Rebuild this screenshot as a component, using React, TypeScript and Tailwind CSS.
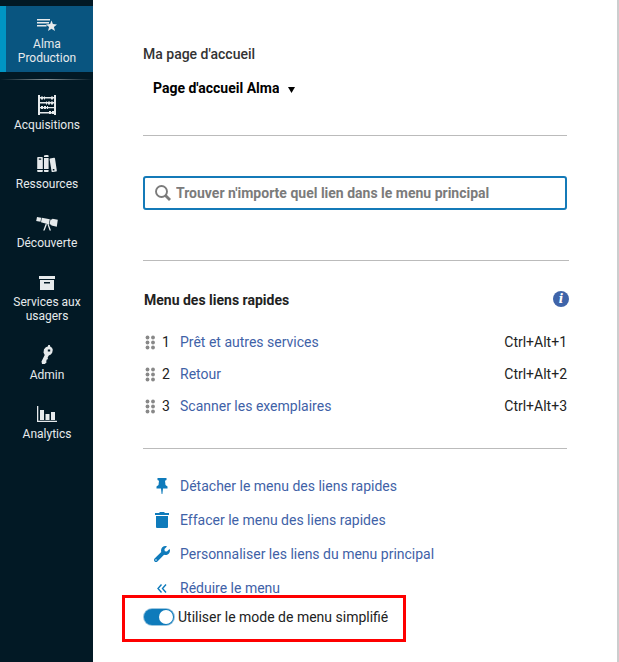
import { useState } from "react";
import type { ReactNode } from "react";
import { FaWrench } from "react-icons/fa";

const AlmaIcon = () => (
  <svg width="22" height="20" viewBox="0 0 22 20" fill="currentColor" aria-hidden="true">
    <path d="M1 4h13v1.400H1zM1 7h12v1.400H1zM1 10h9.500v1.400H1z" />
    <path d="M15.500 5.500l1.400 3.600 4.100.3-3.100 2.500 1.100 4-3.500-2.200-3.500 2.200 1.100-4-3.100-2.500 4.100-.3z" />
  </svg>
);

const AbacusIcon = () => (
  <svg width="20" height="20" viewBox="0 0 20 20" fill="currentColor" aria-hidden="true">
    <path d="M1 0h2v20H1zM17 0h2v20h-2zM3 2h14v1.500H3zM3 7h14v1.500H3zM3 12h14v1.300H3zM3 17h14v1.500H3z" />
    <path d="M4 1.500h2v3H4zM7 1.500h1v3H7zM14 1.500h2v3h-2zM9 6.500h1v3H9zM11 6.500h2v3h-2zM14 6.500h2v3h-2zM4 11h2v3H4zM7 11h2v3H7zM10 11h1v3h-1zM12 16h2v3h-2zM15 16h2v3h-2z" />
  </svg>
);

const BooksIcon = () => (
  <svg width="22" height="20" viewBox="0 0 22 20" fill="currentColor" aria-hidden="true">
    <path
      fillRule="evenodd"
      d="M2 3h4a.8.8 0 0 1 .8.8V15H1.200V3.800A.8.8 0 0 1 2 3zm.8 1.600v1.200h2.400V4.600zM1.200 16h5.600v1.200a.8.8 0 0 1-.8.8H2a.8.8 0 0 1-.8-.8z"
    />
    <path d="M8 1.600L10 1h1.400l1.200.6V3H8zM8 4h4.600v11H8zM8 16h4.600v1.400l-.6.6H8.600l-.6-.6z" />
    <path
      fillRule="evenodd"
      d="M14 4.600l4-.8a.8.8 0 0 1 1 .6l1.800 12a.8.8 0 0 1-.6 1l-3.600.6a.8.8 0 0 1-1-.6l-2-12a.8.8 0 0 1 .4-.8zm2.800 10.400v1.400h1.600V15z"
    />
  </svg>
);

const TelescopeIcon = () => (
  <svg width="22" height="20" viewBox="0 0 22 20" fill="currentColor" aria-hidden="true">
    <path d="M1 4l4.200.7-.7 4.100-4.300-.8zM5.800 4.800l8 1.400-.9 5.200-7.900-2.100zM14.500 6.400h1.300l.7-.6 5.300.9-1 7-5.300-1.100-.4-.9-1.600-.4z" />
    <path d="M9.600 11l1.400.3L8.600 17.500H7.200zM11.400 11.300l1.200-.2 2.400 6.400h-1.400z" />
  </svg>
);

const BoxIcon = () => (
  <svg width="20" height="20" viewBox="0 0 20 20" fill="currentColor" aria-hidden="true">
    <path fillRule="evenodd" d="M2 4h16v3H2zM3 8h14v10H3zm4 2v1.500h6V10z" />
  </svg>
);

const KeyIcon = () => (
  <svg width="20" height="20" viewBox="0 0 20 20" fill="currentColor" aria-hidden="true">
    <path
      fillRule="evenodd"
      d="M8.800 2.300l2-.8.500-1.500h1.500l.6 1.700 1.600 1.100.8 2-.6 3-1.400 1.800-2 .9-1.200 2.200.4 1.200-1.400.8-.3 1.700.2 1L7.800 19H5l-.5-2.500L7.700 10 6.500 7.500 7 4.300zM10.800 4.500v2h2.400v-2z"
    />
  </svg>
);

const ChartIcon = () => (
  <svg width="20" height="20" viewBox="0 0 20 20" fill="currentColor" aria-hidden="true">
    <path d="M0 2h1.300v14.800H20V18H0zM3 6h4v10H3zM8.500 10h4v6h-4zM14 8h4v8h-4z" />
  </svg>
);

const PinIcon = () => (
  <svg width="16" height="16" viewBox="0 0 16 16" fill="currentColor" aria-hidden="true">
    <path d="M3.500 0h9v2l-1.500.7.500 4.300 2 1.500V10.500H9L8.400 16h-.8L7 10.500H2.500V8.500l2-1.500.5-4.300L3.500 2z" />
  </svg>
);

const TrashIcon = () => (
  <svg width="16" height="16" viewBox="0 0 16 16" fill="currentColor" aria-hidden="true">
    <path d="M1 1h4.500V0h5v1H15v2H1zM2 4h12v11a1 1 0 0 1-1 1H3a1 1 0 0 1-1-1z" />
  </svg>
);

const CollapseIcon = () => (
  <svg width="16" height="16" viewBox="0 0 16 16" fill="none" stroke="currentColor" strokeWidth="1.400" aria-hidden="true">
    <path d="M7.500 4.500l-3.500 4 3.500 4M12 4.500l-3.500 4 3.500 4" />
  </svg>
);

const SearchIcon = () => (
  <svg width="16" height="16" viewBox="0 0 16 16" fill="none" stroke="currentColor" aria-hidden="true">
    <circle cx="6.500" cy="6.500" r="5.500" strokeWidth="1.900" />
    <path d="M10.500 10.500L15 15" strokeWidth="2.800" />
  </svg>
);

const DragIcon = () => (
  <svg width="10" height="16" viewBox="0 0 10 16" fill="currentColor" aria-hidden="true">
    {[3, 8, 13].map((y) => (
      <g key={y}>
        <circle cx="2.500" cy={y + 0.5} r="1.900" />
        <circle cx="8" cy={y + 0.5} r="1.900" />
      </g>
    ))}
  </svg>
);

const sections: { label: string; icon: ReactNode }[] = [
  { label: "Acquisitions", icon: <AbacusIcon /> },
  { label: "Ressources", icon: <BooksIcon /> },
  { label: "Découverte", icon: <TelescopeIcon /> },
  { label: "Services aux usagers", icon: <BoxIcon /> },
  { label: "Admin", icon: <KeyIcon /> },
  { label: "Analytics", icon: <ChartIcon /> },
];

const quickLinks = ["Prêt et autres services", "Retour", "Scanner les exemplaires"];

const actions: { label: string; icon: ReactNode }[] = [
  { label: "Détacher le menu des liens rapides", icon: <PinIcon /> },
  { label: "Effacer le menu des liens rapides", icon: <TrashIcon /> },
  { label: "Personnaliser les liens du menu principal", icon: <FaWrench size={16} /> },
  { label: "Réduire le menu", icon: <CollapseIcon /> },
];

function Sidebar() {
  return (
    <nav className="w-[93px] shrink-0 bg-[#021925] pt-1.5 text-center text-xs leading-[14px] text-[#e6eaec]">
      <a href="#alma" className="flex flex-col items-center gap-0.5 border-l-6 border-[#0095c4] bg-[#095580] pt-[9px] pr-[5px] pb-[7px]">
        <AlmaIcon />
        <span>
          Alma
          <br />
          Production
        </span>
      </a>
      <div className="mt-[7px] h-px bg-linear-to-r from-transparent via-[#8a9499] to-transparent" />
      <ul className="flex flex-col gap-[22px] pt-[15px]">
        {sections.map((s) => (
          <li key={s.label}>
            <a href="#section" className="flex flex-col items-center gap-[3px] pr-2 pl-[9px]">
              {s.icon}
              <span>{s.label}</span>
            </a>
          </li>
        ))}
      </ul>
    </nav>
  );
}

export default function App() {
  const [simple, setSimple] = useState(true);

  return (
    <div className="flex min-h-screen bg-white font-[Roboto,sans-serif] text-sm leading-5 text-[#222]">
      <Sidebar />
      <main className="min-w-0 flex-1 border-r-2 border-[#cccdce] px-[50px] pt-11">
        <label htmlFor="home" className="block font-medium text-[#333]">
          Ma page d'accueil
        </label>
        <div className="mt-3.5 flex items-center gap-2 pl-2.5 text-black">
          <select id="home" className="field-sizing-content h-5 appearance-none bg-transparent font-bold">
            <option>Page d'accueil Alma</option>
          </select>
          <svg width="8" height="8" viewBox="0 0 8 8" className="mt-1" aria-hidden="true">
            <path d="M1 1h7L4.500 7z" fill="currentColor" />
          </svg>
        </div>
        <hr className="mt-[37px] border-[#bbb]" />

        <div className="mt-10 flex h-[34px] items-center gap-[5px] rounded-[3px] border-2 border-[#147ab8] px-2.5 text-[#7b7b7b]">
          <SearchIcon />
          <input
            type="search"
            aria-label="Trouver un lien"
            placeholder="Trouver n'importe quel lien dans le menu principal"
            className="min-w-0 flex-1 font-bold outline-none placeholder:text-[#7b7b7b]"
          />
        </div>

        <section className="-mr-0.5 mt-[50px] border-t border-[#bbb] pt-[29px] pl-px">
          <div className="flex items-center justify-between">
            <h2 className="font-bold">Menu des liens rapides</h2>
            <button
              type="button"
              aria-label="Informations"
              className="mb-0.5 size-4 rounded-full bg-[#3f64a9] text-center font-['DejaVu_Serif',serif] text-xs leading-4 font-bold text-white italic"
            >
              i
            </button>
          </div>
          <ol className="mt-[22px] flex flex-col gap-3 pr-0.5">
            {quickLinks.map((label, i) => (
              <li key={label} className="flex items-center pl-px">
                <span className="text-[#888]">
                  <DragIcon />
                </span>
                <span className="w-[25px] pl-[7px]">{i + 1}</span>
                <a href="#link" className="flex-1 text-[#3f62a7]">
                  {label}
                </a>
                <kbd className="font-[Roboto,sans-serif]">Ctrl+Alt+{i + 1}</kbd>
              </li>
            ))}
          </ol>
        </section>
        <hr className="mt-8 border-[#bbb]" />

        <ul className="mt-[27px] flex flex-col gap-3.5 pl-[11px] text-[#3f62a7]">
          {actions.map((a) => (
            <li key={a.label}>
              <button type="button" className="flex items-center gap-2.5">
                <span className="text-[#0f7bbb]">{a.icon}</span>
                {a.label}
              </button>
            </li>
          ))}
        </ul>
        <label className="relative mt-[9px] flex w-fit items-center gap-1 pl-px">
          <input
            type="checkbox"
            role="switch"
            checked={simple}
            onChange={(e) => setSimple(e.target.checked)}
            className="h-4 w-[30px] appearance-none rounded-full bg-[#8b9499] p-px ring-1 ring-[#9cc6df] before:block before:size-3.5 before:rounded-full before:bg-white checked:bg-[#0f7bbb] checked:before:ml-auto"
          />
          Utiliser le mode de menu simplifié
          <span className="pointer-events-none absolute -top-3 -right-[18px] -bottom-[15px] -left-[21px] border-3 border-[#fe0000]" />
        </label>
      </main>
    </div>
  );
}
